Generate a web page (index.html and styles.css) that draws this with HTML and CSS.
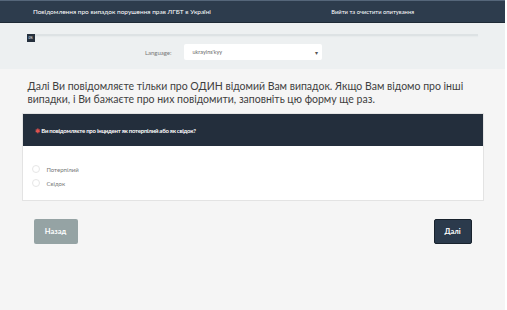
FILE: index.html
```html
<!DOCTYPE html>
<html lang="uk">
<head>
    <meta charset="UTF-8">
    <meta name="viewport" content="width=device-width, initial-scale=1.0">
    <title>Опитування</title>
    <link rel="stylesheet" href="styles.css">
</head>
<body>

<div class="topbar">
    <span class="survey-title">Повідомлення про випадок порушення прав ЛГБТ в Україні</span>
    <a class="logout" href="#">Вийти та очистити опитування</a>
</div>

<div class="band">
    <div class="main">
        <div class="progress">
            <div class="progress-line"></div>
            <span class="progress-badge">0%</span>
        </div>
        <div class="lang-row">
            <label class="lang-label" for="lang">Language:</label>
            <div class="lang-select" id="lang">
                <span>ukrayins'kyy</span>
                <span class="caret">▾</span>
            </div>
        </div>
    </div>
</div>

<div class="main">
    <p class="intro">Далі Ви повідомляєте тільки про ОДИН відомий Вам випадок. Якщо Вам відомо про інші випадки, і Ви бажаєте про них повідомити, заповніть цю форму ще раз.</p>

    <div class="question">
        <div class="question-head">
            <span class="required">✱</span> Ви повідомляєте про інцидент як потерпілий або як свідок?
        </div>
        <ul class="answers">
            <li><span class="radio"></span>Потерпілий</li>
            <li><span class="radio"></span>Свідок</li>
        </ul>
    </div>

    <div class="nav">
        <button class="btn btn-back">Назад</button>
        <button class="btn btn-next">Далі</button>
    </div>
</div>

</body>
</html>
```

FILE: styles.css
```css
html { background: #fff; }
body { margin: 0 2px 0 0; min-height: 100vh; background: #f5f5f5; font-family: Lato, "Liberation Sans", Arial, sans-serif; color: #333; }

.topbar { display: flex; align-items: center; justify-content: space-between; height: 23px; padding: 0 91px 0 33px; background: #2d3c4d; border-top: 1px solid #55667a; border-bottom: 1px solid #1e2a36; box-sizing: border-box; color: #fff; font-size: 6.5px; }
.logout { color: #fff; text-decoration: none; font-size: 5.8px; }

.band { background: #edf0f1; padding: 10px 0 9px; }
.main { width: 462px; margin: 0 auto; }

.progress { position: relative; margin: 0 6px; height: 9px; }
.progress-line { margin-top: 1px; height: 2px; background: #dde2e4; box-shadow: 0 1px 1px #e6eaeb; }
.progress-badge { position: absolute; left: -1px; top: 0; width: 8px; height: 8px; background: #25303d; color: #fff; font-size: 3px; line-height: 8px; text-align: center; }

.lang-row { display: flex; align-items: center; gap: 12px; margin-top: 1px; padding-left: 6px; }
.lang-label { flex: none; width: 144px; text-align: right; font-size: 6px; color: #777; }
.lang-select { flex: none; display: flex; justify-content: space-between; align-items: center; width: 138px; height: 16px; padding: 0 4px 0 9px; box-sizing: border-box; background: #fff; border-radius: 2px; font-size: 5.5px; color: #666; }
.caret { font-size: 6px; color: #555; }

.intro { margin: 11px 0 7px; padding-left: 6px; font-size: 10.5px; line-height: 13px; color: #3f3f3f; }

.question { background: #fff; border: 1px solid #e3e3e3; }
.question-head { height: 32px; padding-left: 12px; display: flex; align-items: center; background: #232e3c; color: #fff; font-size: 6px; font-weight: bold; letter-spacing: -0.25px; }
.required { color: #e0534f; font-size: 6px; margin-right: 2px; }
.answers { list-style: none; margin: 0; padding: 16px 0 10px 9px; }
.answers li { display: flex; align-items: center; height: 14px; font-size: 6px; color: #777; }
.radio { width: 6px; height: 6px; border: 1px solid #e6e6e6; border-radius: 50%; margin-right: 7px; }

.nav { display: flex; justify-content: space-between; padding: 18px 12px 0; }
.btn { height: 25px; border: none; border-radius: 2px; color: #fff; font-family: inherit; font-size: 7.5px; font-weight: bold; cursor: pointer; }
.btn-back { width: 44px; background: #95a3a4; }
.btn-next { width: 38px; background: #2b3a4c; border: 1px solid #18222d; }
```
